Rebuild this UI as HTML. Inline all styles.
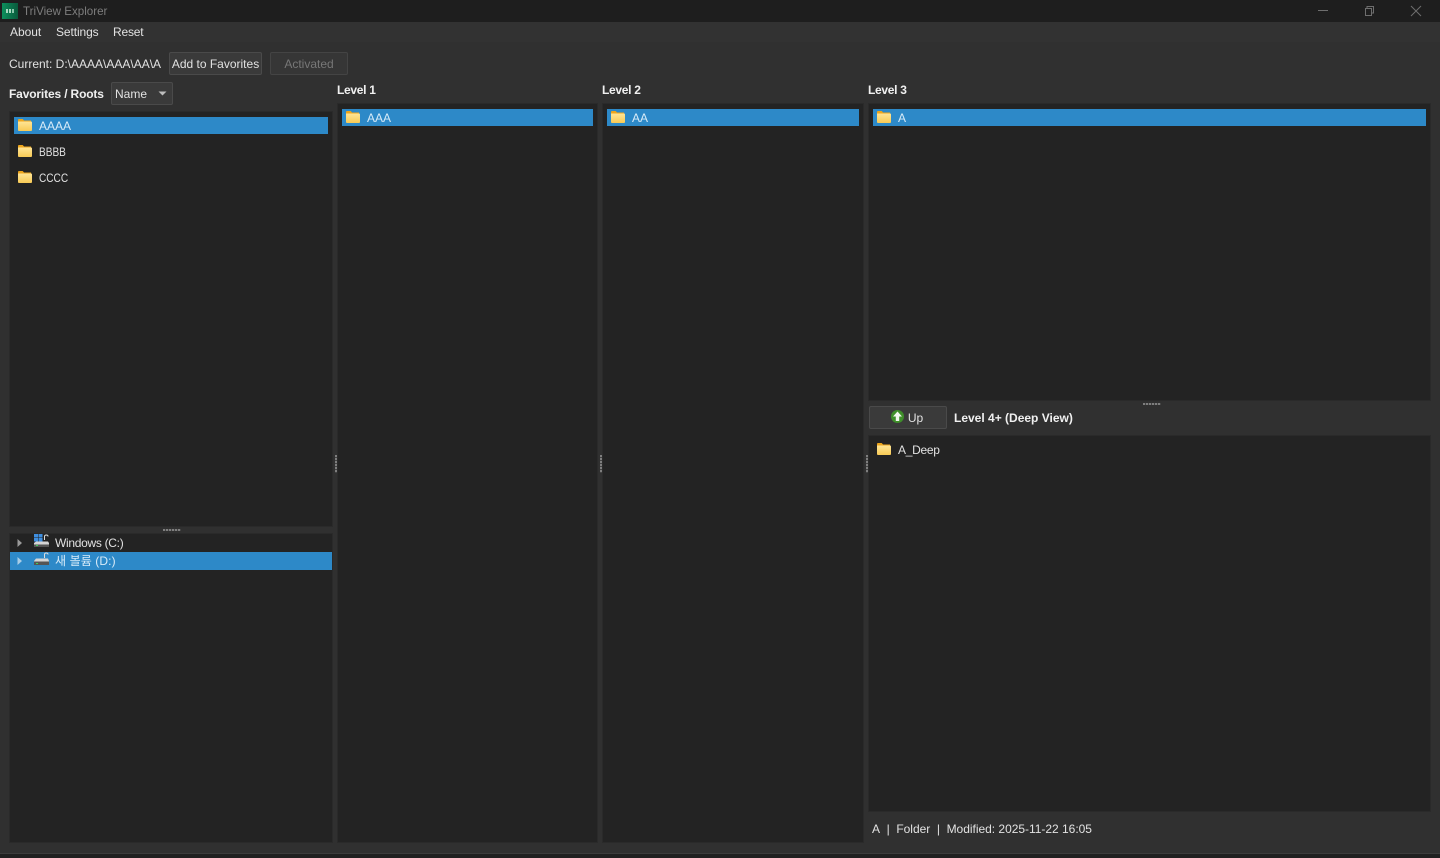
<!DOCTYPE html>
<html><head><meta charset="utf-8"><style>
html,body{margin:0;padding:0;background:#303030}
body{width:1440px;height:858px;position:relative;overflow:hidden;font-family:"Liberation Sans","Noto Sans CJK KR",sans-serif;font-size:12px;color:#e2e2e2}
.a{position:absolute}
.t{position:absolute;white-space:nowrap;line-height:16px;height:16px}
.b{font-weight:bold;color:#f0f0f0;font-size:12px}
.sel{color:#d8ebf8}
.p{position:absolute;background:#232323;box-shadow:0 0 0 1px #2a2a2a}
.s{position:absolute;background:#2d89c8}
.btn{position:absolute;box-sizing:border-box;background:#3a3a3a;border:1px solid #4a4a4a;border-radius:2px;text-align:center;line-height:23px;height:23px}
.dh{position:absolute;width:18px;height:2px;background:repeating-linear-gradient(90deg,#7e7e7e 0 2px,#444 2px 3px)}
.dv{position:absolute;width:2px;height:18px;background:repeating-linear-gradient(180deg,#7e7e7e 0 2px,#444 2px 3px)}
svg{position:absolute;display:block}
</style></head><body>
<div class="a" style="left:0;top:0;width:1440px;height:22px;background:#1e1e1e"></div>
<svg style="left:2px;top:3px" width="16" height="16" viewBox="0 0 16 16"><defs><linearGradient id="ig" x1="0" x2="1" y1="0" y2="0"><stop offset="0" stop-color="#0c8f5c"/><stop offset="1" stop-color="#0a5a3c"/></linearGradient></defs><rect width="16" height="16" fill="url(#ig)"/><rect x="4" y="6" width="2" height="4" fill="#a8d8c0"/><rect x="7" y="6" width="2" height="4" fill="#a8d8c0"/><rect x="10" y="6" width="2" height="4" fill="#8ac4aa"/></svg>
<div class="t" style="left:23px;top:4px;color:#7d7d7d;font-size:11.6px">TriView Explorer</div>
<svg style="left:1317px;top:4px" width="12" height="12"><path d="M1 6.5H11" stroke="#6e6e6e"/></svg>
<svg style="left:1363px;top:4px" width="12" height="13"><path d="M2.5 4.5H8.5V11.5H2.5Z M4 4V2.5H10.5V9H9" fill="none" stroke="#6e6e6e"/></svg>
<svg style="left:1410px;top:5px" width="12" height="12"><path d="M1 1L11 11M11 1L1 11" stroke="#6e6e6e"/></svg>

<div class="a" style="left:0;top:22px;width:1440px;height:20px;background:#323232"></div>
<div class="t" style="left:10px;top:24px;letter-spacing:-.05px">About</div>
<div class="t" style="left:56px;top:24px;letter-spacing:-.1px">Settings</div>
<div class="t" style="left:113px;top:24px;letter-spacing:-.2px">Reset</div>

<div class="t" style="left:9px;top:56px">Current: D:\AAAA\AAA\AA\A</div>
<div class="btn" style="left:169px;top:52px;width:93px">Add to Favorites</div>
<div class="btn" style="left:270px;top:52px;width:78px;color:#777;background:#363636;border-color:#444">Activated</div>

<div class="t b" style="left:9px;top:86px;letter-spacing:-.15px">Favorites / Roots</div>
<div class="btn" style="left:111px;top:82px;width:62px;text-align:left;padding-left:3px">Name</div>
<svg style="left:158px;top:91px" width="10" height="6"><path d="M0.5 0.5H8.5L4.5 4.5Z" fill="#bdbdbd"/></svg>
<div class="t b" style="left:337px;top:82px;letter-spacing:-.3px">Level 1</div>
<div class="t b" style="left:602px;top:82px;letter-spacing:-.3px">Level 2</div>
<div class="t b" style="left:868px;top:82px;letter-spacing:-.3px">Level 3</div>

<div class="p" style="left:10px;top:112px;width:322px;height:414px"></div>
<div class="p" style="left:10px;top:534px;width:322px;height:308px"></div>
<div class="p" style="left:338px;top:104px;width:259px;height:738px"></div>
<div class="p" style="left:603px;top:104px;width:260px;height:738px"></div>
<div class="p" style="left:869px;top:104px;width:561px;height:296px"></div>
<div class="p" style="left:869px;top:436px;width:561px;height:375px"></div>

<div class="s" style="left:14px;top:117px;width:314px;height:17px"></div>
<div class="s" style="left:342px;top:109px;width:251px;height:17px"></div>
<div class="s" style="left:607px;top:109px;width:252px;height:17px"></div>
<div class="s" style="left:873px;top:109px;width:553px;height:17px"></div>
<div class="s" style="left:10px;top:552px;width:322px;height:18px"></div>

<svg width="0" height="0"><defs><linearGradient id="fg" x1="0" x2="0" y1="0" y2="1"><stop offset="0" stop-color="#ffe596"/><stop offset="1" stop-color="#f8ca55"/></linearGradient><symbol id="f" viewBox="0 0 15 12" preserveAspectRatio="none"><path d="M0 1Q0 0 1 0H5L6.5 1.5H14V3H0Z" fill="#eda51c"/><path d="M0 2.5H14Q15 2.5 15 3.5V11Q15 12 14 12H1Q0 12 0 11Z" fill="url(#fg)"/></symbol></defs></svg>
<svg style="left:18px;top:119px" width="14" height="12"><use href="#f" width="14" height="12"/></svg>
<svg style="left:18px;top:145px" width="14" height="12"><use href="#f" width="14" height="12"/></svg>
<svg style="left:18px;top:171px" width="14" height="12"><use href="#f" width="14" height="12"/></svg>
<svg style="left:346px;top:111px" width="14" height="12"><use href="#f" width="14" height="12"/></svg>
<svg style="left:611px;top:111px" width="14" height="12"><use href="#f" width="14" height="12"/></svg>
<svg style="left:877px;top:111px" width="14" height="12"><use href="#f" width="14" height="12"/></svg>
<svg style="left:877px;top:443px" width="14" height="12"><use href="#f" width="14" height="12"/></svg>

<div class="t sel" style="left:39px;top:118px">AAAA</div>
<div class="t" style="left:39px;top:144px;transform:scaleX(.84);transform-origin:left">BBBB</div>
<div class="t" style="left:39px;top:170px;transform:scaleX(.84);transform-origin:left">CCCC</div>
<div class="t sel" style="left:367px;top:110px">AAA</div>
<div class="t sel" style="left:632px;top:110px">AA</div>
<div class="t sel" style="left:898px;top:110px">A</div>
<div class="t" style="left:898px;top:442px;letter-spacing:-.3px">A_Deep</div>

<svg style="left:17px;top:539px" width="6" height="8"><path d="M.5 0L5 4L.5 8Z" fill="#9a9a9a"/></svg>
<svg style="left:17px;top:557px" width="6" height="8"><path d="M.5 0L5 4L.5 8Z" fill="#a8cde6"/></svg>
<svg style="left:33px;top:534px" width="17" height="14" viewBox="0 0 17 14"><rect x="1" y="0" width="4" height="3.5" fill="#3f8fe0"/><rect x="5.5" y="0" width="4" height="3.5" fill="#3f8fe0"/><rect x="1" y="4" width="4" height="3.5" fill="#3f8fe0"/><rect x="5.5" y="4" width="4" height="3.5" fill="#3f8fe0"/><path d="M11.5 6V2.5Q11.5 1 13.3 1T15 2.5" fill="none" stroke="#ddd"/><path d="M1 9L3 7.5H15L16 9V13H1Z" fill="#d5d5d5"/><rect x="1" y="10.5" width="15" height="2.5" fill="#555"/><rect x="3" y="11" width="2" height="1" fill="#3fd05a"/></svg>
<svg style="left:33px;top:552px" width="17" height="14" viewBox="0 0 17 14"><path d="M11.5 6V2.5Q11.5 1 13.3 1T15 2.5" fill="none" stroke="#ddd"/><path d="M1 9L3 6.5H15L16 9V13H1Z" fill="#d5d5d5"/><rect x="1" y="9.5" width="15" height="3.5" fill="#555"/><rect x="3" y="11" width="2" height="1" fill="#3fd05a"/></svg>
<div class="t" style="left:55px;top:535px;letter-spacing:-.3px">Windows (C:)</div>
<div class="t sel" style="left:55px;top:553px;letter-spacing:.1px">새 볼륨 (D:)</div>

<div class="btn" style="left:869px;top:406px;width:78px;padding-left:15px;line-height:23px;text-align:center">Up</div>
<svg style="left:891px;top:410px" width="13" height="13" viewBox="0 0 13 13"><circle cx="6.5" cy="6.5" r="6.5" fill="#3f8f2a"/><path d="M6.5 1.5L11 6.5H8.2V11H4.8V6.5H2Z" fill="#f2f7ee"/></svg>
<div class="t b" style="left:954px;top:410px">Level 4+ (Deep View)</div>

<div class="t" style="left:872px;top:821px;letter-spacing:-.02px">A&nbsp; |&nbsp; Folder&nbsp; |&nbsp; Modified: 2025-11-22 16:05</div>

<div class="dh" style="left:163px;top:529px"></div>
<div class="dh" style="left:1143px;top:403px"></div>
<div class="dv" style="left:335px;top:455px"></div>
<div class="dv" style="left:600px;top:455px"></div>
<div class="dv" style="left:866px;top:455px"></div>

<div class="a" style="left:0;top:853px;width:1440px;height:1px;background:#3c3c3c"></div>
<div class="a" style="left:0;top:854px;width:1440px;height:4px;background:#202020"></div>
</body></html>
